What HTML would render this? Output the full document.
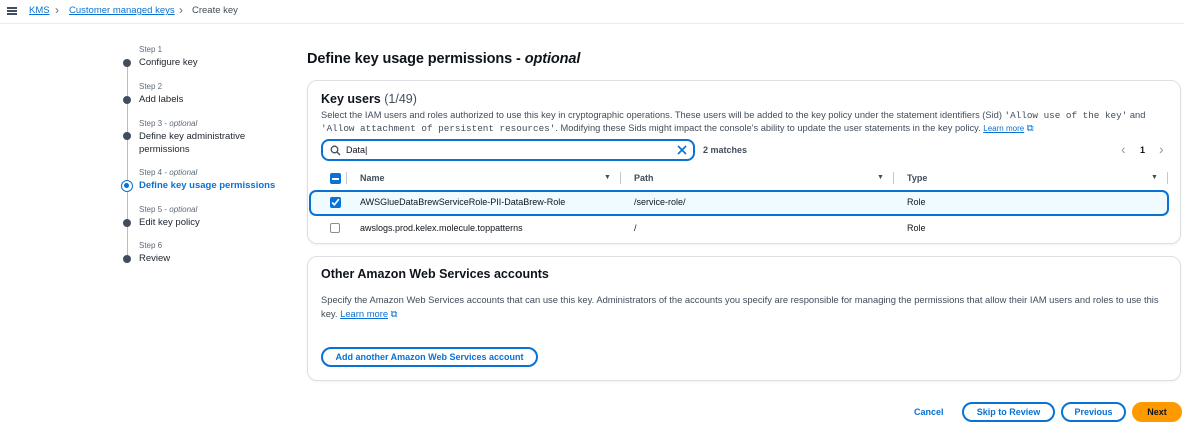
<!DOCTYPE html>
<html><head><meta charset="utf-8"><style>
*{box-sizing:border-box;margin:0;padding:0}
body{width:1184px;height:430px;background:#fff;font-family:"Liberation Sans",sans-serif;color:#0f141a;position:relative;overflow:hidden;font-size:9px}
.a{position:absolute;white-space:nowrap}
.hdr{position:absolute;left:0;top:0;width:1184px;height:24px;border-bottom:1px solid #e9ebed;background:#fff}
.lnk{color:#0972d3;text-decoration:underline}
.sl{color:#5f6b7a;font-size:8px}
.st{font-size:9.5px;color:#1d232a}
.dot{position:absolute;left:123px;width:8px;height:8px;border-radius:50%;background:#414d5c}
.card{position:absolute;border:1px solid #dcdfe3;border-radius:10px;background:#fff;box-shadow:0 1px 2px rgba(0,0,0,.05)}
.mono{font-family:"Liberation Mono",monospace}
.btn{position:absolute;height:20px;border:2px solid #0972d3;border-radius:12px;color:#0972d3;font-weight:bold;font-size:9px;text-align:center;line-height:16px;background:#fff}
.cb{position:absolute;width:10px;height:10px;border-radius:2px}
</style></head><body>
<div class="hdr">
 <div class="a" style="left:7px;top:7px;width:10px;height:2px;background:#414d5c;box-shadow:0 3px 0 #414d5c,0 6px 0 #414d5c"></div>
 <div class="a lnk" style="left:29px;top:5px;font-size:9.5px">KMS</div>
 <div class="a" style="left:55px;top:3px;font-size:12px;color:#5f6b7a">›</div>
 <div class="a lnk" style="left:69px;top:5px;font-size:9.5px">Customer managed keys</div>
 <div class="a" style="left:179px;top:3px;font-size:12px;color:#5f6b7a">›</div>
 <div class="a" style="left:192px;top:5px;font-size:9.5px;color:#414d5c">Create key</div>
</div>
<div class="a" style="left:127px;top:62px;width:1px;height:196px;background:#b6bec9"></div>
<div class="a sl" style="left:139px;top:45px">Step 1</div><div class="a st" style="left:139px;top:57px">Configure key</div><div class="dot" style="top:59px"></div>
<div class="a sl" style="left:139px;top:82px">Step 2</div><div class="a st" style="left:139px;top:94px">Add labels</div><div class="dot" style="top:96px"></div>
<div class="a sl" style="left:139px;top:119px">Step 3 - <i>optional</i></div><div class="a st" style="left:139px;top:130px;line-height:13px">Define key administrative<br>permissions</div><div class="dot" style="top:132px"></div>
<div class="a sl" style="left:139px;top:168px">Step 4 - <i>optional</i></div><div class="a st" style="left:139px;top:180px;color:#0972d3;font-weight:bold">Define key usage permissions</div>
<div class="a" style="left:121px;top:180px;width:12px;height:12px;border-radius:50%;border:1.5px solid #0972d3;background:#fff"><div style="margin:2px;width:5px;height:5px;border-radius:50%;background:#0972d3"></div></div>
<div class="a sl" style="left:139px;top:205px">Step 5 - <i>optional</i></div><div class="a st" style="left:139px;top:217px">Edit key policy</div><div class="dot" style="top:219px"></div>
<div class="a sl" style="left:139px;top:241px">Step 6</div><div class="a st" style="left:139px;top:253px">Review</div><div class="dot" style="top:255px"></div>

<div class="a" style="left:307px;top:51px;font-size:14.5px;font-weight:bold;letter-spacing:-0.1px">Define key usage permissions - <i>optional</i></div>

<div class="card" style="left:307px;top:80px;width:874px;height:164px">
 <div class="a" style="left:13px;top:11px;font-size:12.5px;font-weight:bold">Key users <span style="font-weight:normal;color:#414d5c">(1/49)</span></div>
 <div class="a" style="left:13px;top:28px;font-size:9.3px;color:#414d5c;line-height:13px">Select the IAM users and roles authorized to use this key in cryptographic operations. These users will be added to the key policy under the statement identifiers (Sid) <span class="mono">'Allow use of the key'</span> and<br><span class="mono">'Allow attachment of persistent resources'</span>. Modifying these Sids might impact the console's ability to update the user statements in the key policy. <span class="lnk" style="font-size:8px">Learn more</span> <span style="color:#0972d3">⧉</span></div>
 <div class="a" style="left:13px;top:58px;width:374px;height:22px;border:2px solid #0972d3;border-radius:8px;background:#fff">
  <svg class="a" style="left:7px;top:4px" width="11" height="11" viewBox="0 0 11 11"><circle cx="4.5" cy="4.5" r="3.3" fill="none" stroke="#414d5c" stroke-width="1.3"/><path d="M7 7l3 3" stroke="#414d5c" stroke-width="1.3"/></svg>
  <div class="a" style="left:23px;top:4px;font-size:9px">Data|</div>
  <svg class="a" style="left:354px;top:4px" width="10" height="10" viewBox="0 0 10 10"><path d="M1 1l8 8M9 1l-8 8" stroke="#0972d3" stroke-width="1.6"/></svg>
 </div>
 <div class="a" style="left:395px;top:64px;font-size:9px;font-weight:bold;color:#414d5c">2 matches</div>
 <div class="a" style="left:813px;top:60px;font-size:14px;color:#8d99a8">‹</div>
 <div class="a" style="left:832px;top:64px;font-size:9px;font-weight:bold">1</div>
 <div class="a" style="left:851px;top:60px;font-size:14px;color:#8d99a8">›</div>
 <div class="cb" style="left:22px;top:92px;width:11px;height:11px;background:#0972d3"><div style="margin:4.5px 2px;height:2px;background:#fff"></div></div>
 <div class="a" style="left:38px;top:91px;width:1px;height:12px;background:#c6c6cd"></div>
 <div class="a" style="left:52px;top:92px;font-weight:bold;color:#414d5c">Name</div>
 <div class="a" style="left:296px;top:93px;font-size:7px;color:#414d5c">▼</div>
 <div class="a" style="left:312px;top:91px;width:1px;height:12px;background:#c6c6cd"></div>
 <div class="a" style="left:326px;top:92px;font-weight:bold;color:#414d5c">Path</div>
 <div class="a" style="left:569px;top:93px;font-size:7px;color:#414d5c">▼</div>
 <div class="a" style="left:585px;top:91px;width:1px;height:12px;background:#c6c6cd"></div>
 <div class="a" style="left:599px;top:92px;font-weight:bold;color:#414d5c">Type</div>
 <div class="a" style="left:843px;top:93px;font-size:7px;color:#414d5c">▼</div>
 <div class="a" style="left:859px;top:91px;width:1px;height:12px;background:#c6c6cd"></div>
 <div class="a" style="left:1px;top:109px;width:860px;height:26px;border:2px solid #0972d3;border-radius:7px;background:#f0fbff"></div>
 <div class="cb" style="left:22px;top:116px;width:11px;height:11px;background:#0972d3"><svg style="position:absolute;left:1px;top:1px" width="9" height="9" viewBox="0 0 8 8"><path d="M1 4l2 2 4-5" stroke="#fff" stroke-width="1.5" fill="none"/></svg></div>
 <div class="a" style="left:52px;top:116px">AWSGlueDataBrewServiceRole-PII-DataBrew-Role</div>
 <div class="a" style="left:326px;top:116px">/service-role/</div>
 <div class="a" style="left:599px;top:116px">Role</div>
 <div class="cb" style="left:22px;top:142px;border:1px solid #8c8c94"></div>
 <div class="a" style="left:52px;top:142px">awslogs.prod.kelex.molecule.toppatterns</div>
 <div class="a" style="left:326px;top:142px">/</div>
 <div class="a" style="left:599px;top:142px">Role</div>
</div>

<div class="card" style="left:307px;top:256px;width:874px;height:125px">
 <div class="a" style="left:13px;top:10px;font-size:12.5px;font-weight:bold">Other Amazon Web Services accounts</div>
 <div class="a" style="left:13px;top:36px;font-size:9.4px;color:#414d5c;line-height:14px">Specify the Amazon Web Services accounts that can use this key. Administrators of the accounts you specify are responsible for managing the permissions that allow their IAM users and roles to use this<br>key. <span class="lnk">Learn more</span> <span style="color:#0972d3">⧉</span></div>
 <div class="btn" style="left:13px;top:90px;width:217px">Add another Amazon Web Services account</div>
</div>

<div class="a" style="left:914px;top:407px;font-size:9px;font-weight:bold;color:#0972d3">Cancel</div>
<div class="btn" style="left:962px;top:402px;width:93px">Skip to Review</div>
<div class="btn" style="left:1061px;top:402px;width:65px">Previous</div>
<div class="btn" style="left:1132px;top:402px;width:50px;background:#ff9900;border-color:#ff9900;color:#0f141a">Next</div>
</body></html>
